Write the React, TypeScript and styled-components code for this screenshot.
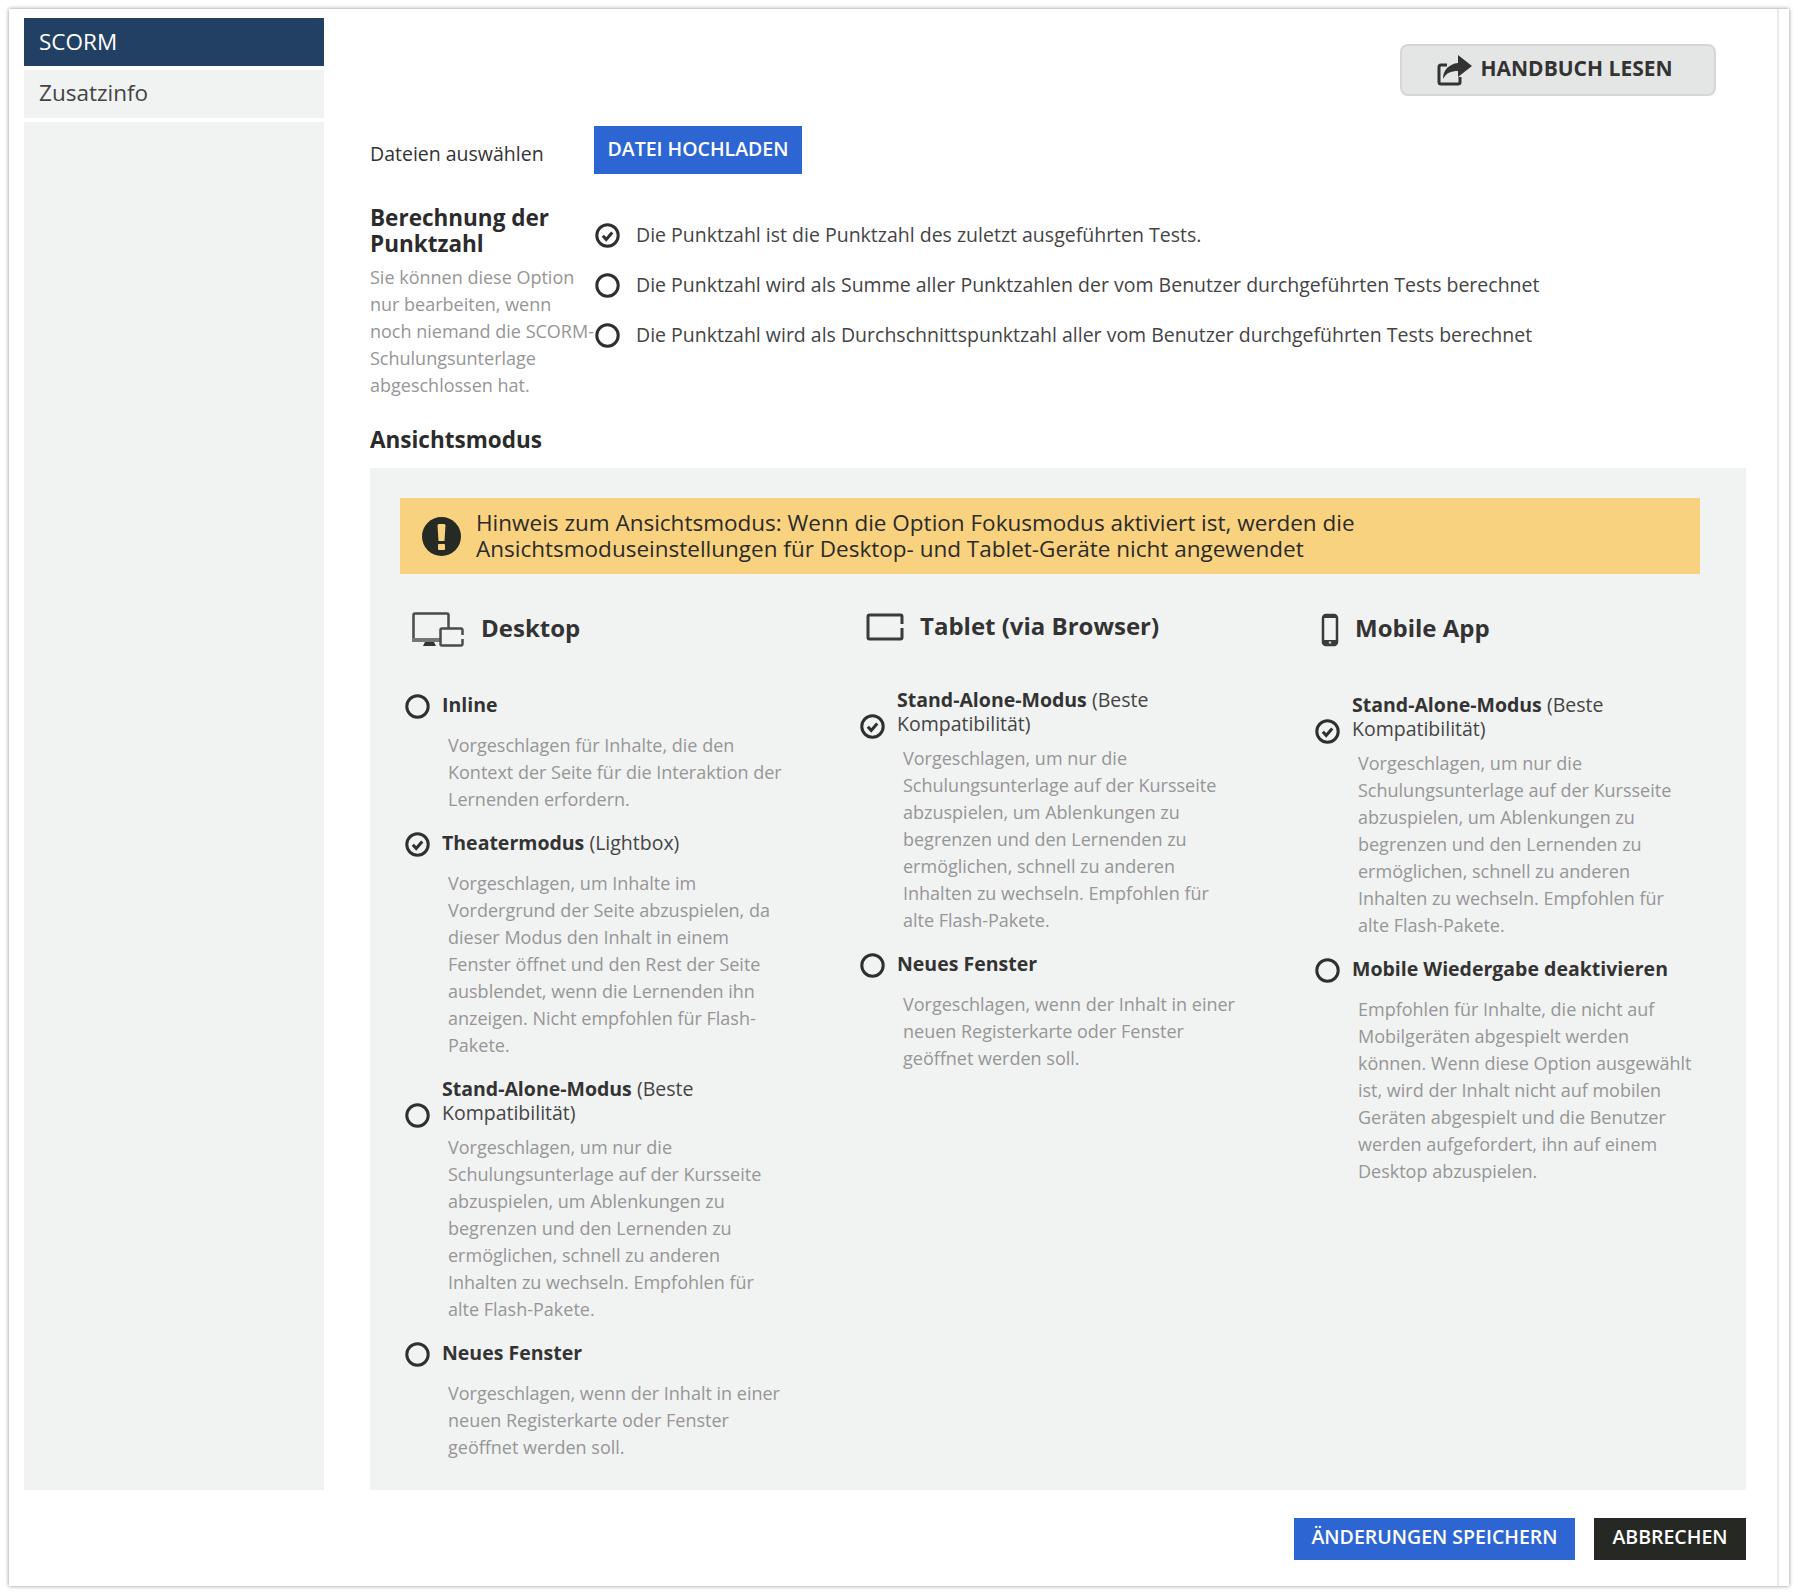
import React from 'react';
import styled, { createGlobalStyle } from 'styled-components';

const GlobalStyle = createGlobalStyle`
  html, body {
    margin: 0;
    padding: 0;
    background: #fff;
    font-family: 'Open Sans', 'Liberation Sans', sans-serif;
    color: #333;
  }
  * { box-sizing: border-box; }
`;

const Page = styled.div`
  width: 1798px;
  height: 1596px;
  padding: 9px;
`;
const Card = styled.div`
  width: 1780px;
  height: 1577px;
  display: flex;
  background: #fff;
  box-shadow: 0 0 4px rgba(0, 0, 0, 0.45);
`;
const Body = styled.div`
  flex: 1;
  padding: 9px 0 0 15px;
`;
const Track = styled.div`
  width: 12px;
  border-left: 2px solid #e8e9e9;
`;
const Columns = styled.div`
  display: flex;
  gap: 46px;
  height: 1472px;
`;
const Sidebar = styled.nav`
  width: 300px;
  display: flex;
  flex-direction: column;
  gap: 4px;
`;
const NavItem = styled.div<{ $active?: boolean }>`
  height: 48px;
  padding: 0 0 ${(p) => (p.$active ? 1 : 3)}px 15px;
  display: flex;
  align-items: center;
  font-size: 22.5px;
  background: ${(p) => (p.$active ? '#224064' : '#f1f2f2')};
  color: ${(p) => (p.$active ? '#fff' : '#444')};
`;
const SideFill = styled.div`
  flex: 1;
  background: #f1f2f2;
`;
const Main = styled.main`
  width: 1376px;
  display: flex;
  flex-direction: column;
`;
const ManualRow = styled.div`
  display: flex;
  justify-content: flex-end;
  padding: 26px 30px 0 0;
`;
const ManualButton = styled.button`
  width: 316px;
  height: 52px;
  display: flex;
  align-items: center;
  justify-content: center;
  gap: 7px;
  padding: 0 6px 4px 0;
  background: #e4e5e5;
  border: 2px solid #d5d6d6;
  border-radius: 8px;
  font-family: inherit;
  font-size: 21px;
  font-weight: 700;
  color: #333;
  & > svg {
    margin-top: 4px;
  }
`;
const FileRow = styled.div`
  display: flex;
  margin-top: 30px;
`;
const FileLabel = styled.div`
  width: 224px;
  padding-top: 15px;
  font-size: 19.5px;
  line-height: 26px;
`;
const UploadButton = styled.button`
  width: 208px;
  height: 48px;
  padding: 0 0 4px;
  background: #2d66d3;
  border: none;
  font-family: inherit;
  font-size: 19.5px;
  font-weight: 600;
  color: #fff;
`;
const ScoreRow = styled.section`
  display: flex;
  margin-top: 31px;
`;
const ScoreIntro = styled.div`
  width: 225px;
  flex-shrink: 0;
`;
const Heading = styled.h2`
  margin: 0;
  font-size: 22.5px;
  line-height: 26px;
  font-weight: 700;
  color: #2b2b2b;
`;
const Hint = styled.p`
  margin: 7px 0 0;
  width: 225px;
  font-size: 18px;
  line-height: 27px;
  color: #969696;
`;
const ScoreOptions = styled.div`
  display: flex;
  flex-direction: column;
  gap: 25px;
  padding-top: 18px;
`;
const ScoreOption = styled.label`
  display: flex;
  align-items: center;
  gap: 16px;
  height: 25px;
  font-size: 19.5px;
  color: #444;
`;
const ScoreText = styled.span`
  margin-bottom: 3px;
`;
const ModeHeading = styled(Heading)`
  margin-top: 28px;
`;
const Panel = styled.section`
  margin-top: 15px;
  flex: 1;
  padding: 30px 46px 0 30px;
  background: #f1f2f2;
`;
const Notice = styled.div`
  height: 76px;
  display: flex;
  align-items: center;
  gap: 15px;
  padding-left: 22px;
  background: #f8d27f;
  font-size: 22.5px;
  line-height: 26px;
  color: #2b2b2b;
`;
const ModeGrid = styled.div`
  display: grid;
  grid-template-columns: 455px 455px 390px;
  margin-top: 38px;
`;
const ModeHead = styled.div<{ $h: number }>`
  height: ${(p) => p.$h}px;
  display: flex;
  align-items: center;
  gap: 16px;
  padding-left: 11px;
  margin-bottom: 46px;
`;
const ModeTitle = styled.span`
  margin-bottom: 4px;
  font-size: 24px;
  font-weight: 700;
  color: #333;
`;
const Option = styled.div`
  padding-left: 5px;
  margin-bottom: 18px;
`;
const OptionRow = styled.label<{ $wrapped?: boolean }>`
  display: flex;
  align-items: flex-end;
  gap: 12px;
  margin-bottom: ${(p) => (p.$wrapped ? 6 : 13)}px;
  & > svg {
    flex-shrink: 0;
  }
`;
const OptionLabel = styled.span<{ $wrapped?: boolean }>`
  display: block;
  max-width: 345px;
  font-size: 19.5px;
  line-height: 24px;
  color: #444;
  padding-bottom: ${(p) => (p.$wrapped ? 3 : 2)}px;
  b {
    font-weight: 700;
    color: #333;
  }
`;
const OptionText = styled.p`
  margin: 0 0 0 43px;
  width: 340px;
  font-size: 18px;
  line-height: 27px;
  color: #969696;
`;
const Footer = styled.footer`
  display: flex;
  justify-content: flex-end;
  gap: 19px;
  width: 1722px;
  margin-top: 28px;
`;
const SaveButton = styled.button`
  width: 281px;
  height: 42px;
  padding: 0 0 5px;
  background: #2d66d3;
  border: none;
  font-family: inherit;
  font-size: 19.5px;
  font-weight: 600;
  color: #fff;
`;
const CancelButton = styled(SaveButton)`
  width: 152px;
  background: #252823;
`;

const Radio = ({ checked }: { checked?: boolean }) => (
  <svg width={25} height={25} viewBox="0 0 25 25">
    <circle cx={12.5} cy={12.5} r={10.7} fill="none" stroke="#2d302c" strokeWidth={3} />
    {checked && (
      <path d="M7.8 12.8l3.4 3.6 6-7" fill="none" stroke="#2d302c" strokeWidth={3} />
    )}
  </svg>
);

const ShareIcon = () => (
  <svg width={36} height={32} viewBox="0 0 36 32">
    <path
      d="M10 11H4a2 2 0 0 0-2 2v15a2 2 0 0 0 2 2h17a2 2 0 0 0 2-2v-5"
      fill="none"
      stroke="#333"
      strokeWidth={3}
    />
    <path d="M21 1l14 11-14 11v-6c-7 0-12 2-15 8 0-9 6-15 15-16z" fill="#333" />
  </svg>
);

const AlertIcon = () => (
  <svg width={39} height={39} viewBox="0 0 39 39">
    <circle cx={19.5} cy={19.5} r={19.5} fill="#262a25" />
    <path d="M15.500 8.500a1.500 1.500 0 0 1 1.500-1.500h5a1.500 1.500 0 0 1 1.500 1.500L22.500 24h-6z" fill="#f8d27f" />
    <rect x={16} y={27} width={7} height={6} rx={1} fill="#f8d27f" />
  </svg>
);

const DesktopIcon = () => (
  <svg width={54} height={35} viewBox="0 0 54 35">
    <path d="M2.500 28V3a1.500 1.500 0 0 1 1.500-1.500h32a1.500 1.500 0 0 1 1.500 1.500v14" fill="none" stroke="#4a4a4a" strokeWidth={2.500} />
    <rect x={1} y={26} width={28} height={4} fill="#777" />
    <path d="M14 30h9l2 4H12z" fill="#333" />
    <path d="M51.500 23v-5a1.500 1.500 0 0 0-1.500-1.500H31a1.500 1.500 0 0 0-1.500 1.500v14a1.500 1.500 0 0 0 1.500 1.500h19a1.500 1.500 0 0 0 1.500-1.500v-5" fill="#f1f2f2" stroke="#4a4a4a" strokeWidth={2.500} />
  </svg>
);

const TabletIcon = () => (
  <svg width={38} height={28} viewBox="0 0 38 28">
    <path d="M36 11V3.500A1.500 1.500 0 0 0 34.500 2h-31A1.500 1.500 0 0 0 2 3.500v21A1.500 1.500 0 0 0 3.500 26h31a1.500 1.500 0 0 0 1.500-1.500V15" fill="none" stroke="#3a3a3a" strokeWidth={3} />
  </svg>
);

const PhoneIcon = () => (
  <svg width={18} height={34} viewBox="0 0 18 34">
    <rect x={2} y={2} width={14} height={30} rx={3} fill="none" stroke="#3a3a3a" strokeWidth={2.500} />
    <rect x={2} y={2} width={14} height={3} fill="#3a3a3a" />
    <rect x={2} y={27} width={14} height={5} rx={1.500} fill="#3a3a3a" />
    <circle cx={9} cy={29.500} r={1.300} fill="#ccc" />
  </svg>
);

const LONG_STANDALONE =
  'Vorgeschlagen, um nur die Schulungsunterlage auf der Kursseite abzuspielen, um Ablenkungen zu begrenzen und den Lernenden zu ermöglichen, schnell zu anderen Inhalten zu wechseln. Empfohlen für alte Flash-Pakete.';
const NEW_WINDOW =
  'Vorgeschlagen, wenn der Inhalt in einer neuen Registerkarte oder Fenster geöffnet werden soll.';

interface Mode {
  name: string;
  extra?: string;
  text: string;
  checked?: boolean;
  wrapped?: boolean;
}

const desktopModes: Mode[] = [
  {
    name: 'Inline',
    text: 'Vorgeschlagen für Inhalte, die den Kontext der Seite für die Interaktion der Lernenden erfordern.',
  },
  {
    name: 'Theatermodus',
    extra: '(Lightbox)',
    checked: true,
    text: 'Vorgeschlagen, um Inhalte im Vordergrund der Seite abzuspielen, da dieser Modus den Inhalt in einem Fenster öffnet und den Rest der Seite ausblendet, wenn die Lernenden ihn anzeigen. Nicht empfohlen für Flash-Pakete.',
  },
  { name: 'Stand-Alone-Modus', extra: '(Beste Kompatibilität)', wrapped: true, text: LONG_STANDALONE },
  { name: 'Neues Fenster', text: NEW_WINDOW },
];

const tabletModes: Mode[] = [
  { name: 'Stand-Alone-Modus', extra: '(Beste Kompatibilität)', wrapped: true, checked: true, text: LONG_STANDALONE },
  { name: 'Neues Fenster', text: NEW_WINDOW },
];

const mobileModes: Mode[] = [
  { name: 'Stand-Alone-Modus', extra: '(Beste Kompatibilität)', wrapped: true, checked: true, text: LONG_STANDALONE },
  {
    name: 'Mobile Wiedergabe deaktivieren',
    text: 'Empfohlen für Inhalte, die nicht auf Mobilgeräten abgespielt werden können. Wenn diese Option ausgewählt ist, wird der Inhalt nicht auf mobilen Geräten abgespielt und die Benutzer werden aufgefordert, ihn auf einem Desktop abzuspielen.',
  },
];

const ModeList = ({ modes }: { modes: Mode[] }) => (
  <>
    {modes.map((m) => (
      <Option key={m.name}>
        <OptionRow $wrapped={m.wrapped}>
          <Radio checked={m.checked} />
          <OptionLabel $wrapped={m.wrapped}>
            <b>{m.name}</b> {m.extra}
          </OptionLabel>
        </OptionRow>
        <OptionText>{m.text}</OptionText>
      </Option>
    ))}
  </>
);

export default function App() {
  return (
    <Page>
      <GlobalStyle />
      <Card>
        <Body>
          <Columns>
            <Sidebar>
              <NavItem $active>SCORM</NavItem>
              <NavItem>Zusatzinfo</NavItem>
              <SideFill />
            </Sidebar>
            <Main>
              <ManualRow>
                <ManualButton>
                  <ShareIcon />
                  HANDBUCH LESEN
                </ManualButton>
              </ManualRow>
              <FileRow>
                <FileLabel>Dateien auswählen</FileLabel>
                <UploadButton>DATEI HOCHLADEN</UploadButton>
              </FileRow>
              <ScoreRow>
                <ScoreIntro>
                  <Heading>Berechnung der Punktzahl</Heading>
                  <Hint>
                    Sie können diese Option nur bearbeiten, wenn noch niemand die SCORM-Schulungsunterlage abgeschlossen hat.
                  </Hint>
                </ScoreIntro>
                <ScoreOptions>
                  <ScoreOption>
                    <Radio checked />
                    <ScoreText>Die Punktzahl ist die Punktzahl des zuletzt ausgeführten Tests.</ScoreText>
                  </ScoreOption>
                  <ScoreOption>
                    <Radio />
                    <ScoreText>Die Punktzahl wird als Summe aller Punktzahlen der vom Benutzer durchgeführten Tests berechnet</ScoreText>
                  </ScoreOption>
                  <ScoreOption>
                    <Radio />
                    <ScoreText>Die Punktzahl wird als Durchschnittspunktzahl aller vom Benutzer durchgeführten Tests berechnet</ScoreText>
                  </ScoreOption>
                </ScoreOptions>
              </ScoreRow>
              <ModeHeading>Ansichtsmodus</ModeHeading>
              <Panel>
                <Notice>
                  <AlertIcon />
                  <span>
                    Hinweis zum Ansichtsmodus: Wenn die Option Fokusmodus aktiviert ist, werden die
                    <br />
                    Ansichtsmoduseinstellungen für Desktop- und Tablet-Geräte nicht angewendet
                  </span>
                </Notice>
                <ModeGrid>
                  <div>
                    <ModeHead $h={35}>
                      <DesktopIcon />
                      <ModeTitle>Desktop</ModeTitle>
                    </ModeHead>
                    <ModeList modes={desktopModes} />
                  </div>
                  <div>
                    <ModeHead $h={30}>
                      <TabletIcon />
                      <ModeTitle>Tablet (via Browser)</ModeTitle>
                    </ModeHead>
                    <ModeList modes={tabletModes} />
                  </div>
                  <div>
                    <ModeHead $h={35}>
                      <PhoneIcon />
                      <ModeTitle>Mobile App</ModeTitle>
                    </ModeHead>
                    <ModeList modes={mobileModes} />
                  </div>
                </ModeGrid>
              </Panel>
            </Main>
          </Columns>
          <Footer>
            <SaveButton>ÄNDERUNGEN SPEICHERN</SaveButton>
            <CancelButton>ABBRECHEN</CancelButton>
          </Footer>
        </Body>
        <Track />
      </Card>
    </Page>
  );
}
